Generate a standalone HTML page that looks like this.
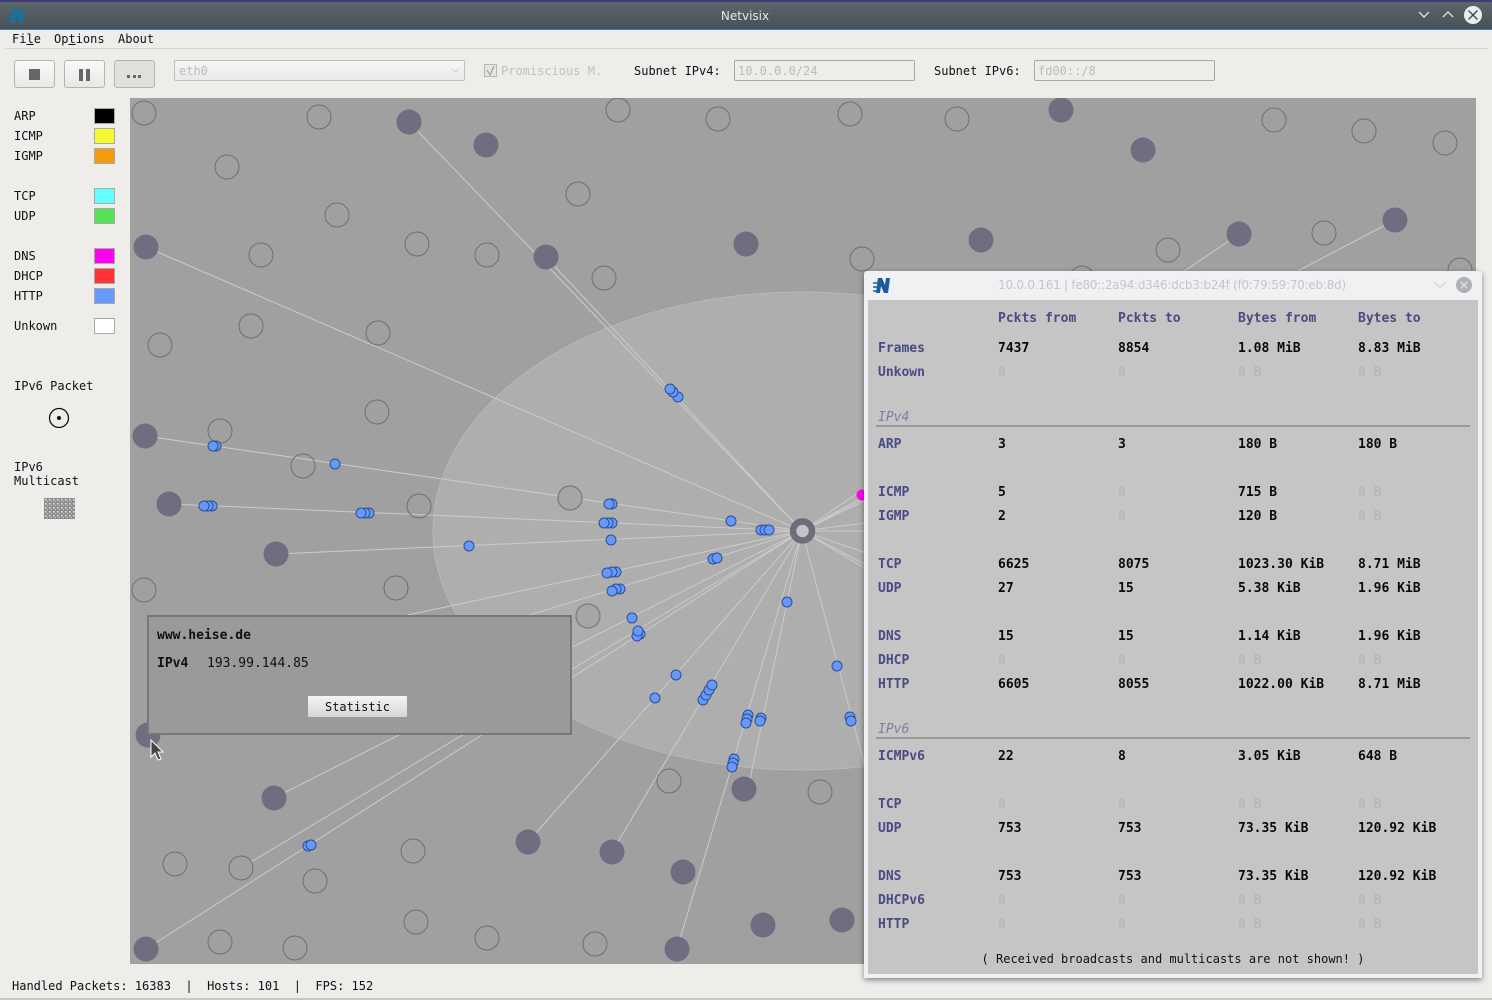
<!DOCTYPE html>
<html><head><meta charset="utf-8"><title>Netvisix</title>
<style>
html,body{margin:0;padding:0;width:1492px;height:1000px;overflow:hidden;background:#efedea}
body{position:relative;font:12px/14px "DejaVu Sans Mono","Liberation Mono",monospace;color:#111}
.a{position:absolute;white-space:pre}
.box{position:absolute;box-sizing:border-box}
.btn{position:absolute;box-sizing:border-box;top:60px;width:41px;height:28px;border:1px solid #b5b3af;border-radius:3px;background:linear-gradient(#fbfafa,#e9e7e4)}
.inp{position:absolute;box-sizing:border-box;top:60px;height:21px;border:1px solid #aaa8a4;border-radius:2px;background:#efedea;color:#bdbbb7;padding:3px 3px;line-height:14px}
.sw{position:absolute;box-sizing:border-box;left:94px;width:21px;height:16px;border:1px solid #a9a9a9}
#panel{font-size:13px}
#panel .l,#panel .h,#panel .v,#panel .z,#panel .s{margin-top:1px}
#panel .l{position:absolute;left:10px;font-weight:bold;color:#4a4a85;white-space:pre}
#panel .h{position:absolute;font-weight:bold;color:#4a4a85;white-space:pre}
#panel .v{position:absolute;font-weight:bold;color:#0a0a0a;white-space:pre}
#panel .z{position:absolute;font-weight:bold;color:#b7b7b7;white-space:pre}
.c1{left:130px}.c2{left:250px}.c3{left:370px}.c4{left:490px}
#panel .s{position:absolute;left:10px;font-style:italic;color:#7f7fa0}
</style></head><body>

<!-- title bar -->
<div class="box" style="left:0;top:0;width:1492px;height:30px;background:linear-gradient(#5c666b,#475156);border-top:2px solid #3b3d78;border-bottom:1px solid #3c7fae"></div>
<svg class="a" style="left:8px;top:7px" width="18" height="18" viewBox="0 0 18 18"><path d="M5 1h4l3 7 1-7h4l-2 15h-4L8 9l-1 7H3z" fill="#1d7098"/><path d="M0 6h5M0 10h4M0 14h4" stroke="#1d7098" stroke-width="1.500"/></svg>
<div class="a" style="left:645px;width:200px;top:9px;text-align:center;font:12px/15px 'DejaVu Sans',sans-serif;color:#e4e7e8">Netvisix</div>
<svg class="a" style="left:1415px;top:5px" width="72" height="20" viewBox="0 0 72 20">
<path d="M4 7l5 5 5-5M28 12l5-5 5 5" fill="none" stroke="#eef0f0" stroke-width="1.200"/>
<circle cx="58" cy="10" r="9" fill="#eceeee"/><path d="M53.500 5.500l9 9M62.500 5.500l-9 9" stroke="#3f4a4f" stroke-width="1.400"/></svg>

<!-- menu -->
<div class="a" style="left:12px;top:32px">Fi<u>l</u>e</div>
<div class="a" style="left:54px;top:32px">Op<u>t</u>ions</div>
<div class="a" style="left:118px;top:32px">About</div>
<div class="box" style="left:5px;top:48px;width:1483px;height:1px;background:#d8d6d2"></div>

<!-- toolbar -->
<div class="btn" style="left:14px"></div><div class="box" style="left:29px;top:69px;width:11px;height:11px;background:#666"></div>
<div class="btn" style="left:64px"></div><div class="box" style="left:79px;top:69px;width:4px;height:12px;background:#666"></div><div class="box" style="left:86px;top:69px;width:4px;height:12px;background:#666"></div>
<div class="btn" style="left:114px;background:#e2e0dd"></div>
<div class="box" style="left:127px;top:75px;width:3px;height:3px;background:#666"></div><div class="box" style="left:133px;top:75px;width:3px;height:3px;background:#666"></div><div class="box" style="left:138px;top:75px;width:3px;height:3px;background:#666"></div>
<div class="inp" style="left:174px;width:291px;padding-left:4px;background:linear-gradient(#f8f7f6,#ebe9e6);border-color:#c0beba">eth0</div>
<svg class="a" style="left:451px;top:68px" width="9" height="6"><path d="M1 1l3.500 3L8 1" fill="none" stroke="#d0cecb" stroke-width="1"/></svg>
<div class="box" style="left:484px;top:64px;width:13px;height:13px;border:1px solid #b9b7b3;background:#e6e4e1"></div>
<svg class="a" style="left:484px;top:64px" width="13" height="13"><path d="M3 6l3 5 4-9" fill="none" stroke="#a5a3a0" stroke-width="1.200"/></svg>
<div class="a" style="left:501px;top:64px;color:#c2c0bc">Promiscious M.</div>
<div class="a" style="left:634px;top:64px">Subnet IPv4:</div>
<div class="inp" style="left:734px;width:181px">10.0.0.0/24</div>
<div class="a" style="left:934px;top:64px">Subnet IPv6:</div>
<div class="inp" style="left:1034px;width:181px">fd00::/8</div>

<!-- legend -->
<div class="a" style="left:14px;top:109px">ARP</div><div class="sw" style="top:108px;background:#000"></div>
<div class="a" style="left:14px;top:129px">ICMP</div><div class="sw" style="top:128px;background:#f4f930"></div>
<div class="a" style="left:14px;top:149px">IGMP</div><div class="sw" style="top:148px;background:#f39c0b"></div>
<div class="a" style="left:14px;top:189px">TCP</div><div class="sw" style="top:188px;background:#66ffff"></div>
<div class="a" style="left:14px;top:209px">UDP</div><div class="sw" style="top:208px;background:#55e055"></div>
<div class="a" style="left:14px;top:249px">DNS</div><div class="sw" style="top:248px;background:#ff00ee"></div>
<div class="a" style="left:14px;top:269px">DHCP</div><div class="sw" style="top:268px;background:#ff3333"></div>
<div class="a" style="left:14px;top:289px">HTTP</div><div class="sw" style="top:288px;background:#6699ff"></div>
<div class="a" style="left:14px;top:319px">Unkown</div><div class="sw" style="top:318px;background:#fff"></div>
<div class="a" style="left:14px;top:379px">IPv6 Packet</div>
<svg class="a" style="left:48px;top:407px" width="22" height="22"><circle cx="11" cy="11" r="9.500" fill="none" stroke="#111" stroke-width="1.300"/><circle cx="11" cy="11" r="2" fill="#111"/></svg>
<div class="a" style="left:14px;top:460px">IPv6</div>
<div class="a" style="left:14px;top:474px">Multicast</div>
<svg class="a" style="left:44px;top:498px" width="31" height="21"><defs><pattern id="d" width="4" height="4" patternUnits="userSpaceOnUse"><rect width="4" height="4" fill="#8f8f8f"/><rect x="1" y="1" width="1.500" height="1.500" fill="#e4e4e4"/><rect x="3" y="3" width="1" height="1" fill="#ccc"/></pattern></defs><rect width="31" height="21" fill="url(#d)"/></svg>

<!-- canvas -->
<svg class="a" style="left:130px;top:98px" width="1346" height="866" viewBox="130 98 1346 866">
<rect x="130" y="98" width="1346" height="866" fill="#a0a0a0"/>
<ellipse cx="802" cy="531" rx="369" ry="239" fill="#aeaeae" stroke="#b8b8b8" stroke-width="1"/>
<g stroke="#cbcbcb" stroke-width="1" fill="none">
<path d="M802 531L409 122M802 531L546 257M802 531L146 247M802 531L145 436M802 531L169 504M802 531L276 554"/>
<path d="M802 531L300 638M802 531L300 686M802 531L274 798M802 531L241 868M802 531L146 949M802 531L528 842M802 531L612 852M802 531L748 789M802 531L677 949M802 531L866 770"/>
<path d="M802 531L866 495M802 531L866 500M802 531L866 523M802 531L866 531M802 531L866 553M802 531L866 565M802 531L866 569"/>
<path d="M802 531L1239 234M802 531L1395 220"/>
</g>
<g fill="none" stroke="#6f6f6f" stroke-width="1">
<circle cx="144" cy="113" r="12"/><circle cx="319" cy="117" r="12"/><circle cx="618" cy="110" r="12"/><circle cx="718" cy="119" r="12"/><circle cx="850" cy="114" r="12"/><circle cx="957" cy="119" r="12"/><circle cx="1274" cy="120" r="12"/><circle cx="1364" cy="131" r="12"/><circle cx="1445" cy="143" r="12"/><circle cx="227" cy="167" r="12"/><circle cx="337" cy="215" r="12"/><circle cx="578" cy="194" r="12"/><circle cx="261" cy="255" r="12"/><circle cx="417" cy="244" r="12"/><circle cx="487" cy="255" r="12"/><circle cx="604" cy="278" r="12"/><circle cx="862" cy="259" r="12"/><circle cx="1168" cy="250" r="12"/><circle cx="1324" cy="233" r="12"/><circle cx="1460" cy="270" r="12"/><circle cx="1082" cy="278" r="12"/><circle cx="251" cy="326" r="12"/><circle cx="160" cy="345" r="12"/><circle cx="378" cy="333" r="12"/><circle cx="377" cy="412" r="12"/><circle cx="220" cy="431" r="12"/><circle cx="303" cy="466" r="12"/><circle cx="419" cy="506" r="12"/><circle cx="570" cy="498" r="12" fill="#a6a6a6"/><circle cx="144" cy="590" r="12"/><circle cx="396" cy="588" r="12"/><circle cx="588" cy="616" r="12" fill="#a6a6a6"/><circle cx="669" cy="781" r="12"/><circle cx="820" cy="792" r="12"/><circle cx="175" cy="864" r="12"/><circle cx="241" cy="868" r="12" fill="#a0a0a0"/><circle cx="315" cy="881" r="12"/><circle cx="413" cy="851" r="12"/><circle cx="416" cy="922" r="12"/><circle cx="487" cy="938" r="12"/><circle cx="595" cy="944" r="12"/><circle cx="295" cy="948" r="12"/><circle cx="220" cy="942" r="12"/>
</g>
<g fill="#6e6e80">
<circle cx="409" cy="122" r="12.500"/><circle cx="486" cy="145" r="12.500"/><circle cx="1061" cy="110" r="12.500"/><circle cx="1143" cy="150" r="12.500"/><circle cx="146" cy="247" r="12.500"/><circle cx="546" cy="257" r="12.500"/><circle cx="746" cy="244" r="12.500"/><circle cx="981" cy="240" r="12.500"/><circle cx="1239" cy="234" r="12.500"/><circle cx="1395" cy="220" r="12.500"/><circle cx="145" cy="436" r="12.500"/><circle cx="169" cy="504" r="12.500"/><circle cx="276" cy="554" r="12.500"/><circle cx="148" cy="735" r="12.500"/><circle cx="274" cy="798" r="12.500"/><circle cx="528" cy="842" r="12.500"/><circle cx="612" cy="852" r="12.500"/><circle cx="683" cy="872" r="12.500"/><circle cx="744" cy="789" r="12.500"/><circle cx="146" cy="949" r="12.500"/><circle cx="677" cy="949" r="12.500"/><circle cx="763" cy="925" r="12.500"/><circle cx="842" cy="920" r="12.500"/>
</g>
<circle cx="802.500" cy="531" r="9.500" fill="#c4c4c8" stroke="#6e6e78" stroke-width="6.500"/>
<g fill="#6699ff" stroke="#2c4f8f" stroke-width="1">
<circle cx="678" cy="397" r="5"/><circle cx="673" cy="392" r="5"/><circle cx="670" cy="389" r="5"/><circle cx="216" cy="446" r="5"/><circle cx="213" cy="446" r="5"/><circle cx="335" cy="464" r="5"/><circle cx="212" cy="506" r="5"/><circle cx="208" cy="506" r="5"/><circle cx="204" cy="506" r="5"/><circle cx="369" cy="513" r="5"/><circle cx="365" cy="513" r="5"/><circle cx="361" cy="513" r="5"/><circle cx="469" cy="546" r="5"/><circle cx="612" cy="504" r="5"/><circle cx="609" cy="504" r="5"/><circle cx="612" cy="523" r="5"/><circle cx="608" cy="523" r="5"/><circle cx="604" cy="523" r="5"/><circle cx="611" cy="540" r="5"/><circle cx="731" cy="521" r="5"/><circle cx="761" cy="530" r="5"/><circle cx="765" cy="530" r="5"/><circle cx="769" cy="530" r="5"/><circle cx="713" cy="559" r="5"/><circle cx="717" cy="558" r="5"/><circle cx="616" cy="572" r="5"/><circle cx="612" cy="572" r="5"/><circle cx="607" cy="573" r="5"/><circle cx="620" cy="589" r="5"/><circle cx="616" cy="589" r="5"/><circle cx="612" cy="591" r="5"/><circle cx="632" cy="618" r="5"/><circle cx="640" cy="634" r="5"/><circle cx="637" cy="636" r="5"/><circle cx="638" cy="631" r="5"/><circle cx="787" cy="602" r="5"/><circle cx="837" cy="666" r="5"/><circle cx="676" cy="675" r="5"/><circle cx="655" cy="698" r="5"/><circle cx="703" cy="700" r="5"/><circle cx="706" cy="695" r="5"/><circle cx="709" cy="690" r="5"/><circle cx="712" cy="685" r="5"/><circle cx="748" cy="715" r="5"/><circle cx="747" cy="719" r="5"/><circle cx="746" cy="723" r="5"/><circle cx="761" cy="718" r="5"/><circle cx="760" cy="721" r="5"/><circle cx="850" cy="717" r="5"/><circle cx="851" cy="721" r="5"/><circle cx="734" cy="759" r="5"/><circle cx="733" cy="763" r="5"/><circle cx="732" cy="767" r="5"/><circle cx="308" cy="846" r="5"/><circle cx="311" cy="845" r="5"/>
</g>
<circle cx="862" cy="495" r="5.500" fill="#ff00ee"/>
</svg>

<!-- dialog -->
<div class="box" style="left:147px;top:615px;width:425px;height:120px;border:2px solid #777;background:#9a9a9a"></div>
<div class="a" style="left:157px;top:629px;font-weight:bold;font-size:13px">www.heise.de</div>
<div class="a" style="left:157px;top:657px;font-weight:bold;font-size:13px">IPv4</div>
<div class="a" style="left:207px;top:657px;font-size:13px">193.99.144.85</div>
<div class="box" style="left:308px;top:696px;width:99px;height:21px;background:linear-gradient(#f4f4f4,#d6d6d6);text-align:center;line-height:22px;border-radius:1px">Statistic</div>
<svg class="a" style="left:148px;top:738px" width="18" height="26"><path d="M3 2v17l4-4 3 7 3-1-3-7h5z" fill="#444" stroke="#fff" stroke-width="1"/></svg>

<!-- stats panel -->
<div class="box" style="left:864px;top:271px;width:618px;height:707px;background:#eff1f2;border-radius:3px 3px 0 0;box-shadow:0 2px 6px rgba(0,0,0,.45)"></div>
<svg class="a" style="left:873px;top:277px" width="18" height="17" viewBox="0 0 18 17"><path d="M5 1h4l3 7 1-7h4l-2 15h-4L8 9l-1 7H3z" fill="#1c5c9e"/><path d="M0 6h5M0 10h4M0 14h4" stroke="#1c5c9e" stroke-width="1.500"/></svg>
<div class="a" style="left:972px;width:400px;top:278px;text-align:center;font:12px/15px 'DejaVu Sans',sans-serif;color:#c3c7c9;letter-spacing:-.25px">10.0.0.161 | fe80::2a94:d346:dcb3:b24f (f0:79:59:70:eb:8d)</div>
<svg class="a" style="left:1432px;top:276px" width="44" height="18"><path d="M2 6l6 5 6-5" fill="none" stroke="#c9ccce" stroke-width="1"/><circle cx="32" cy="9" r="8" fill="#aeb2b4"/><path d="M28.500 5.500l7 7M35.500 5.500l-7 7" stroke="#e6e8e9" stroke-width="1.200"/></svg>

<div id="panel" class="box" style="left:868px;top:300px;width:610px;height:674px;background:#c5c5c5">
<div class="h c1" style="top:11px">Pckts from</div><div class="h c2" style="top:11px">Pckts to</div><div class="h c3" style="top:11px">Bytes from</div><div class="h c4" style="top:11px">Bytes to</div>

<div class="l" style="top:41px">Frames</div><div class="v c1" style="top:41px">7437</div><div class="v c2" style="top:41px">8854</div><div class="v c3" style="top:41px">1.08 MiB</div><div class="v c4" style="top:41px">8.83 MiB</div>
<div class="l" style="top:65px">Unkown</div><div class="z c1" style="top:65px">0</div><div class="z c2" style="top:65px">0</div><div class="z c3" style="top:65px">0 B</div><div class="z c4" style="top:65px">0 B</div>

<div class="s" style="top:110px">IPv4</div>
<div class="box" style="left:8px;top:125px;width:594px;height:2px;background:#9a9a9a"></div>
<div class="l" style="top:137px">ARP</div><div class="v c1" style="top:137px">3</div><div class="v c2" style="top:137px">3</div><div class="v c3" style="top:137px">180 B</div><div class="v c4" style="top:137px">180 B</div>

<div class="l" style="top:185px">ICMP</div><div class="v c1" style="top:185px">5</div><div class="z c2" style="top:185px">0</div><div class="v c3" style="top:185px">715 B</div><div class="z c4" style="top:185px">0 B</div>
<div class="l" style="top:209px">IGMP</div><div class="v c1" style="top:209px">2</div><div class="z c2" style="top:209px">0</div><div class="v c3" style="top:209px">120 B</div><div class="z c4" style="top:209px">0 B</div>

<div class="l" style="top:257px">TCP</div><div class="v c1" style="top:257px">6625</div><div class="v c2" style="top:257px">8075</div><div class="v c3" style="top:257px">1023.30 KiB</div><div class="v c4" style="top:257px">8.71 MiB</div>
<div class="l" style="top:281px">UDP</div><div class="v c1" style="top:281px">27</div><div class="v c2" style="top:281px">15</div><div class="v c3" style="top:281px">5.38 KiB</div><div class="v c4" style="top:281px">1.96 KiB</div>

<div class="l" style="top:329px">DNS</div><div class="v c1" style="top:329px">15</div><div class="v c2" style="top:329px">15</div><div class="v c3" style="top:329px">1.14 KiB</div><div class="v c4" style="top:329px">1.96 KiB</div>
<div class="l" style="top:353px">DHCP</div><div class="z c1" style="top:353px">0</div><div class="z c2" style="top:353px">0</div><div class="z c3" style="top:353px">0 B</div><div class="z c4" style="top:353px">0 B</div>
<div class="l" style="top:377px">HTTP</div><div class="v c1" style="top:377px">6605</div><div class="v c2" style="top:377px">8055</div><div class="v c3" style="top:377px">1022.00 KiB</div><div class="v c4" style="top:377px">8.71 MiB</div>

<div class="s" style="top:422px">IPv6</div>
<div class="box" style="left:8px;top:437px;width:594px;height:2px;background:#9a9a9a"></div>
<div class="l" style="top:449px">ICMPv6</div><div class="v c1" style="top:449px">22</div><div class="v c2" style="top:449px">8</div><div class="v c3" style="top:449px">3.05 KiB</div><div class="v c4" style="top:449px">648 B</div>

<div class="l" style="top:497px">TCP</div><div class="z c1" style="top:497px">0</div><div class="z c2" style="top:497px">0</div><div class="z c3" style="top:497px">0 B</div><div class="z c4" style="top:497px">0 B</div>
<div class="l" style="top:521px">UDP</div><div class="v c1" style="top:521px">753</div><div class="v c2" style="top:521px">753</div><div class="v c3" style="top:521px">73.35 KiB</div><div class="v c4" style="top:521px">120.92 KiB</div>

<div class="l" style="top:569px">DNS</div><div class="v c1" style="top:569px">753</div><div class="v c2" style="top:569px">753</div><div class="v c3" style="top:569px">73.35 KiB</div><div class="v c4" style="top:569px">120.92 KiB</div>
<div class="l" style="top:593px">DHCPv6</div><div class="z c1" style="top:593px">0</div><div class="z c2" style="top:593px">0</div><div class="z c3" style="top:593px">0 B</div><div class="z c4" style="top:593px">0 B</div>
<div class="l" style="top:617px">HTTP</div><div class="z c1" style="top:617px">0</div><div class="z c2" style="top:617px">0</div><div class="z c3" style="top:617px">0 B</div><div class="z c4" style="top:617px">0 B</div>

<div class="a" style="left:0;width:610px;top:652px;text-align:center;font-size:12px">( Received broadcasts and multicasts are not shown! )</div>
</div>

<!-- status -->
<div class="a" style="left:12px;top:979px">Handled Packets: 16383  |  Hosts: 101  |  FPS: 152</div>
<div class="box" style="left:0;top:998px;width:1492px;height:2px;background:#c9c8c5"></div>
</body></html>
